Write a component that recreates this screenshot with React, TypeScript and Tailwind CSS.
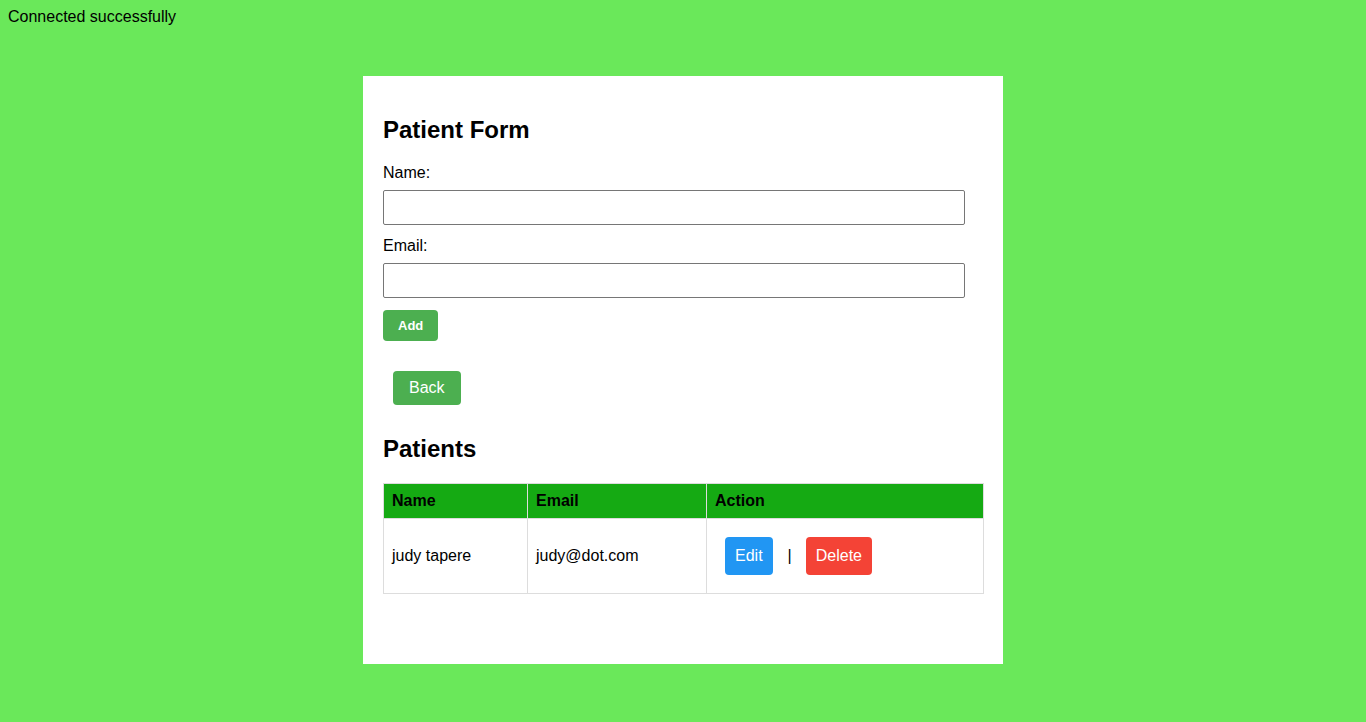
export default function App() {
  return (
    <div className="min-h-screen bg-[#6ae85a] text-black text-[16px] leading-[18px] font-['Liberation_Sans',Arial,sans-serif] pt-[8px] pb-[58px]">
      <p className="pl-2 h-[18px]">Connected successfully</p>
      <div className="mx-auto mt-[50px] w-[640px] bg-white px-5 pt-10 pb-[70px]">
        <h2 className="text-[24px] leading-[28px] font-bold">Patient Form</h2>
        <div className="mt-5">
          <label className="block h-[18px]">Name:</label>
          <input
            type="text"
            className="mt-2 block w-[582px] h-[35px] border border-[#767676] rounded-[2px] bg-white px-2 outline-none"
          />
          <label className="block h-[18px] mt-[12px]">Email:</label>
          <input
            type="email"
            className="mt-[8px] block w-[582px] h-[35px] border border-[#767676] rounded-[2px] bg-white px-2 outline-none"
          />
          <button className="mt-3 block h-[31px] px-[15px] bg-[#4caf50] text-white text-[13px] font-bold rounded-[4px]">
            Add
          </button>
        </div>
        <button className="mt-[30px] ml-[10px] block h-[34px] px-[16px] bg-[#4caf50] text-white text-[16px] rounded-[4px]">
          Back
        </button>
        <h2 className="mt-[30px] text-[24px] leading-[28px] font-bold">Patients</h2>
        <table className="mt-5 w-[600px] border-collapse border border-[#dddddd] table-fixed">
          <colgroup>
            <col className="w-[144px]" />
            <col className="w-[179px]" />
            <col className="w-[277px]" />
          </colgroup>
          <thead>
            <tr className="bg-[#15aa13] h-[35px]">
              <th className="border border-[#dddddd] px-2 text-left font-bold">Name</th>
              <th className="border border-[#dddddd] px-2 text-left font-bold">Email</th>
              <th className="border border-[#dddddd] px-2 text-left font-bold">Action</th>
            </tr>
          </thead>
          <tbody>
            <tr className="h-[75px]">
              <td className="border border-[#dddddd] px-2">judy tapere</td>
              <td className="border border-[#dddddd] px-2">judy@dot.com</td>
              <td className="border border-[#dddddd] px-2">
                <div className="flex items-center">
                  <button className="ml-[10px] h-[38px] px-[10px] bg-[#2196f3] text-white rounded-[4px]">
                    Edit
                  </button>
                  <span className="ml-[15px] mr-[14px] whitespace-pre">|</span>
                  <button className="h-[38px] px-[10px] bg-[#f44336] text-white rounded-[4px]">
                    Delete
                  </button>
                </div>
              </td>
            </tr>
          </tbody>
        </table>
      </div>
    </div>
  );
}
